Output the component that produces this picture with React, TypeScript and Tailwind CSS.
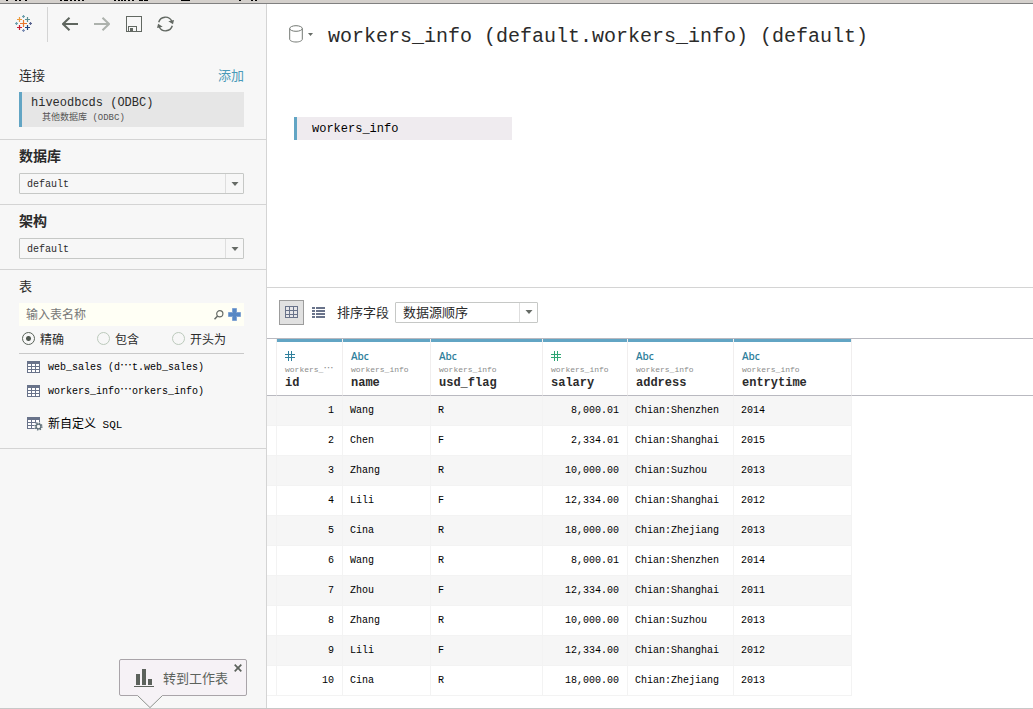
import React from "react";

const mono = "font-['Liberation_Mono','Noto_Sans_CJK_SC',monospace]";
const cjk = "font-['Noto_Sans_CJK_SC',sans-serif]";

type Column = {
  name: string;
  source: React.ReactNode;
  kind: "text" | "number";
  hash?: string;
};

const Dots = () => <span className={`${cjk} inline-block w-3 text-center text-[12px] leading-[10px]`}>⋯</span>;

const columns: Column[] = [
  {
    name: "id",
    source: (
      <>
        workers_<span className={`${cjk} inline-block text-[10px] leading-[6px]`}>⋯</span>
      </>
    ),
    kind: "number",
    hash: "text-[#2f7f9c]",
  },
  { name: "name", source: "workers_info", kind: "text" },
  { name: "usd_flag", source: "workers_info", kind: "text" },
  { name: "salary", source: "workers_info", kind: "number", hash: "text-[#2fa574]" },
  { name: "address", source: "workers_info", kind: "text" },
  { name: "entrytime", source: "workers_info", kind: "text" },
];

const rows = [
  ["1", "Wang", "R", "8,000.01", "Chian:Shenzhen", "2014"],
  ["2", "Chen", "F", "2,334.01", "Chian:Shanghai", "2015"],
  ["3", "Zhang", "R", "10,000.00", "Chian:Suzhou", "2013"],
  ["4", "Lili", "F", "12,334.00", "Chian:Shanghai", "2012"],
  ["5", "Cina", "R", "18,000.00", "Chian:Zhejiang", "2013"],
  ["6", "Wang", "R", "8,000.01", "Chian:Shenzhen", "2014"],
  ["7", "Zhou", "F", "12,334.00", "Chian:Shanghai", "2011"],
  ["8", "Zhang", "R", "10,000.00", "Chian:Suzhou", "2013"],
  ["9", "Lili", "F", "12,334.00", "Chian:Shanghai", "2012"],
  ["10", "Cina", "R", "18,000.00", "Chian:Zhejiang", "2013"],
];

function Caret({ className = "" }: { className?: string }) {
  return (
    <svg className={className} width="8" height="4" viewBox="0 0 8 4" aria-hidden="true">
      <path d="M0.5 0h7L4 4z" fill="#666b66" />
    </svg>
  );
}

function Picker({ id, label, value, className }: { id: string; label: string; value: string; className: string }) {
  return (
    <div className="relative w-full">
      <select
        id={id}
        aria-label={label}
        className={`block h-[21px] w-full appearance-none rounded-[1px] border border-[#c6c8c6] pl-[7px] pr-5 ${className}`}
      >
        <option>{value}</option>
      </select>
      <span className="pointer-events-none absolute inset-y-px right-px flex w-[18px] items-center justify-center border-l border-[#dedede]">
        <Caret />
      </span>
    </div>
  );
}

function GridIcon({ fill = "#ffffff", header = true }: { fill?: string; header?: boolean }) {
  return (
    <svg width="13" height="12" viewBox="0 0 13 12" shapeRendering="crispEdges" aria-hidden="true">
      <rect width="13" height="12" fill="#69738a" />
      {[header ? 3 : 1, header ? 6 : 5, 9].map((y) =>
        [1, 5, 9].map((x) => (
          <rect key={`${x}-${y}`} x={x} y={y} width="3" height={header || y === 9 ? 2 : 3} fill={fill} />
        )),
      )}
    </svg>
  );
}

function CustomSqlIcon() {
  return (
    <svg width="16" height="14" viewBox="0 0 16 14" aria-hidden="true">
      <g shapeRendering="crispEdges">
        <rect width="13" height="12" fill="#69738a" />
        {[3, 6, 9].map((y) => [1, 5, 9].map((x) => <rect key={`${x}-${y}`} x={x} y={y} width="3" height="2" fill="#fff" />))}
      </g>
      <circle cx="11.5" cy="9.5" r="4.4" fill="#f7f7f7" />
      <circle cx="11.5" cy="9.5" r="3.3" fill="none" stroke="#60717a" strokeWidth="1.6" strokeDasharray="1.3 1.29" />
      <circle cx="11.5" cy="9.5" r="2.4" fill="#f7f7f7" stroke="#60717a" strokeWidth="1.3" />
    </svg>
  );
}

function Logo() {
  const marks: [number, number, number, string][] = [
    [8.5, 8.5, 3.5, "#e8762c"],
    [4.5, 4.5, 2.5, "#eb9a3c"],
    [12.5, 4.5, 2.5, "#5c9092"],
    [4.5, 12.5, 2.5, "#c72035"],
    [12.5, 12.5, 2.5, "#1f447e"],
    [8.5, 1.5, 1.5, "#6da0ad"],
    [8.5, 15.5, 1.5, "#7d8fb5"],
    [1.5, 8.5, 1.5, "#6da0ad"],
    [15.5, 8.5, 1.5, "#5b6591"],
  ];
  return (
    <svg width="17" height="17" viewBox="0 0 17 17" aria-hidden="true">
      {marks.map(([x, y, r, c]) => (
        <path key={`${x}-${y}`} d={`M${x - r} ${y}h${2 * r}M${x} ${y - r}v${2 * r}`} stroke={c} strokeWidth="1.2" />
      ))}
    </svg>
  );
}

function Arrow({ color, flip }: { color: string; flip?: boolean }) {
  return (
    <svg width="16" height="14" viewBox="0 0 16 14" fill="none" stroke={color} strokeWidth="2" aria-hidden="true">
      <path d={flip ? "M0 7h15M8.5 0.7 15 7l-6.5 6.3" : "M16 7H1M7.5 0.7 1 7l6.5 6.3"} />
    </svg>
  );
}

function SideHeading({ children, bold, htmlFor }: { children: React.ReactNode; bold?: boolean; htmlFor: string }) {
  return (
    <label
      htmlFor={htmlFor}
      className={`block h-5 text-[#2b2b2b] ${bold ? "text-[14px] font-bold leading-[18px]" : "text-[13px] leading-5"}`}
    >
      {children}
    </label>
  );
}

function Sidebar() {
  return (
    <aside className="flex w-[267px] shrink-0 flex-col border-r border-[#d4d4d4] bg-[#f7f7f7]">
      <div className="flex h-11 items-start pl-[15px] pt-[3px]">
        <button aria-label="Start page" className="mt-2 block">
          <Logo />
        </button>
        <span className="ml-[15px] h-[35px] w-px bg-[#d4d4d4]" />
        <div className="mt-[9px] flex h-4 items-center gap-4 pl-[14px]">
          <button aria-label="Back"><Arrow color="#5f665f" /></button>
          <button aria-label="Forward"><Arrow color="#adb2ad" flip /></button>
          <button aria-label="Save">
            <svg width="16" height="16" viewBox="0 0 16 16" shapeRendering="crispEdges" aria-hidden="true">
              <path d="M0.5 0.5h15v15H.5zM2.5 15V10.5h8V15" fill="none" stroke="#626862" />
              <path d="M4 12h3v3H4z" fill="#626862" />
            </svg>
          </button>
          <button aria-label="Refresh" className="-ml-px">
            <svg width="17" height="16" viewBox="0 0 17 16" fill="none" aria-hidden="true">
              <path d="M1.7 6.2A7 7 0 0 1 14.8 5.3M15.3 9.8A7 7 0 0 1 2.2 10.7" stroke="#626862" strokeWidth="1.4" />
              <path d="M11.3 5.2l5.7-1.3-1 4.3zM5.7 10.8L0 12l1.1-4.3z" fill="#626862" />
            </svg>
          </button>
        </div>
      </div>

      <section className="border-b border-[#d4d4d4] pb-3 pl-[19px] pr-[22px] pt-[17px]">
        <div className="flex h-5 items-center justify-between text-[13px]">
          <h2 className="text-[#2b2b2b]">连接</h2>
          <a href="#add" className="text-[#4a9ab9]">添加</a>
        </div>
        <button className={`mt-[7px] block h-[35px] w-full border-l-[3px] border-[#62a5c4] bg-[#e6e6e6] pl-[9px] text-left ${mono}`}>
          <span className="block text-[12px] leading-4 text-[#2b2b2b]">hiveodbcds (ODBC)</span>
          <span className="block pl-[11px] text-[9px] leading-[14px] text-[#555555]">其他数据库 (ODBC)</span>
        </button>
      </section>

      <section className="border-b border-[#d4d4d4] pb-[10px] pl-[19px] pr-[22px] pt-[6px]">
        <SideHeading bold htmlFor="database">数据库</SideHeading>
        <div className="mt-[7px]">
          <Picker id="database" label="数据库" value="default" className={`${mono} bg-[#f7f7f7] pt-[2px] text-[10px] text-[#2b2b2b]`} />
        </div>
      </section>

      <section className="border-b border-[#d4d4d4] pb-[10px] pl-[19px] pr-[22px] pt-[6px]">
        <SideHeading bold htmlFor="schema">架构</SideHeading>
        <div className="mt-[7px]">
          <Picker id="schema" label="架构" value="default" className={`${mono} bg-[#f7f7f7] pt-[2px] text-[10px] text-[#2b2b2b]`} />
        </div>
      </section>

      <section className="border-b border-[#d4d4d4] pb-3 pl-[19px] pr-[22px] pt-[6px]">
        <SideHeading htmlFor="table-name">表</SideHeading>
        <div className="mt-[7px] flex h-[23px] items-center bg-[#fffff5] pl-[7px] pr-[3px]">
          <input
            id="table-name"
            placeholder="输入表名称"
            className="min-w-0 flex-1 bg-transparent pb-[2px] text-[12px] text-[#2b2b2b] outline-none placeholder:text-[#777777]"
          />
          <button aria-label="Search">
            <svg width="10" height="10" viewBox="0 0 10 10" fill="none" stroke="#666b66" aria-hidden="true">
              <circle cx="5.8" cy="3.8" r="3.1" strokeWidth="1.2" />
              <path d="M3.6 6.1.5 9.3" strokeWidth="1.5" />
            </svg>
          </button>
          <button aria-label="Add table" className="ml-[4px]">
            <svg width="13" height="13" viewBox="0 0 13 13" aria-hidden="true">
              <path d="M4.5.5h4v4h4v4h-4v4h-4v-4h-4v-4h4z" fill="#5788c4" stroke="#80a3d3" />
            </svg>
          </button>
        </div>
        <div className="grid h-7 grid-cols-3 border-b border-[#c9c9c9] pb-[2px]">
          {["精确", "包含", "开头为"].map((t, i) => (
            <label key={t} className="flex items-center gap-[5px] whitespace-nowrap pl-[3px] text-[12px] leading-5 text-[#2b2b2b]">
              <input
                type="radio"
                name="match"
                defaultChecked={i === 0}
                className="h-[13px] w-[13px] shrink-0 appearance-none rounded-full border border-[#bccabc] checked:border-[#596359] checked:bg-[radial-gradient(circle,#505850_2px,transparent_3px)]"
              />
              {t}
            </label>
          ))}
        </div>
        <ul className={`pl-2 pt-px text-[10px] text-black ${mono}`}>
          <li>
            <button className="flex h-6 items-center gap-2 whitespace-nowrap">
              <GridIcon />
              <span>web_sales (d<Dots />t.web_sales)</span>
            </button>
          </li>
          <li>
            <button className="flex h-6 items-center gap-2 whitespace-nowrap">
              <GridIcon />
              <span>workers_info<Dots />orkers_info)</span>
            </button>
          </li>
          <li className="mt-[9px]">
            <button className="flex h-6 items-center gap-[5px] text-[12px]">
              <CustomSqlIcon />
              <span className="pt-[2px]">新自定义<span className="text-[11px]"> SQL</span></span>
            </button>
          </li>
        </ul>
      </section>

      <div className="mt-auto flex flex-col items-end pr-[19px]">
        <div className="flex h-[37px] w-32 rounded-[2px] border border-[#a9a4a9] bg-[#f6f2f6]">
          <button className="flex flex-1 items-center gap-[9px] pl-[14px] text-[13px] text-[#5c625c]">
            <svg width="20" height="18" viewBox="0 0 20 18" fill="#5c625c" shapeRendering="crispEdges" aria-hidden="true">
              <path d="M2 5h4v11H2zM8 0h4v16H8zM14 10h4v6h-4zM0 17h20v1H0z" />
            </svg>
            转到工作表
          </button>
          <button aria-label="Close" className="mr-1 mt-1 h-2">
            <svg width="8" height="8" viewBox="0 0 8 8" aria-hidden="true">
              <path d="M.7.7l6.6 6.6M7.3.7.7 7.3" stroke="#5c625c" strokeWidth="1.7" />
            </svg>
          </button>
        </div>
        <svg className="relative -mt-px mr-[84px]" width="26" height="13" viewBox="0 0 26 13" aria-hidden="true">
          <path d="M0 0h26L13 13z" fill="#f6f2f6" />
          <path d="M.5.5 13 12.6 25.5.5" fill="none" stroke="#8d928d" />
        </svg>
      </div>
    </aside>
  );
}

function DataTable() {
  return (
    <table className={`w-full table-fixed border-separate border-spacing-0 text-left ${mono}`}>
      <colgroup>
        <col className="w-[10px]" />
        <col className="w-[66px]" />
        <col className="w-[88px]" />
        <col className="w-[112px]" />
        <col className="w-[85px]" />
        <col className="w-[106px]" />
        <col className="w-[118px]" />
        <col />
      </colgroup>
      <thead>
        <tr>
          <td className="border-b border-r border-b-[#b9b9c0] border-r-[#f0eeee]" />
          {columns.map((c) => (
            <th key={c.name} scope="col" className="border-b border-r border-b-[#b9b9c0] border-r-[#f0eeee] p-0 align-top font-normal">
              <div className="h-[56px] border-t-[3px] border-[#62a5c4] pl-2 pt-[6px]">
                <div className="flex h-4 items-center font-['Open_Sans',sans-serif] text-[10px] font-semibold leading-4 text-[#2f7f9c]">
                  {c.kind === "text" ? (
                    "Abc"
                  ) : (
                    <svg className={c.hash} width="10" height="10" viewBox="0 0 10 10" shapeRendering="crispEdges" aria-label="#">
                      <path d="M0 3.5h10M0 6.5h10M3.5 0v10M6.5 0v10" stroke="currentColor" />
                    </svg>
                  )}
                </div>
                <div className="h-3 whitespace-nowrap text-[8px] leading-3 text-[#8b8b8b]">{c.source}</div>
                <div className="h-[14px] text-[12px] font-bold leading-[14px] text-[#2b2b2b]">{c.name}</div>
              </div>
            </th>
          ))}
          <td className="border-b border-[#b9b9c0]" />
        </tr>
      </thead>
      <tbody className="text-[10px] text-black">
        {rows.map((row) => (
          <tr key={row[0]} className="group">
            <td className="h-[30px] border-b border-r border-[#f3f3f3] group-odd:bg-[#f6f6f6]" />
            {row.map((v, i) => (
              <td
                key={i}
                className={`h-[30px] border-b border-r border-[#f3f3f3] py-0 group-odd:bg-[#f6f6f6] ${columns[i].kind === "number" ? "px-2 text-right" : "px-[7px] text-left"}`}
              >
                {v}
              </td>
            ))}
            <td />
          </tr>
        ))}
      </tbody>
    </table>
  );
}

function MenuEdge() {
  const ticks = [6, 15, 19, 25, 60, 64, 66, 70, 74, 78, 82, 114, 118, 121, 124, 128, 132, 239, 251, 255];
  return (
    <div className="h-1 shrink-0 border-b border-[#808080] bg-[#d4d0cc]">
      <svg className="block" width="270" height="1" shapeRendering="crispEdges" aria-hidden="true">
        {ticks.map((x) => (
          <rect key={x} x={x} width="2" height="1" />
        ))}
        <path d="M139 0h4v1h-4zM144 0h4v1h-4zM181 0h9v1h-9z" />
      </svg>
    </div>
  );
}

export default function App() {
  return (
    <div className={`flex min-h-screen flex-col bg-white ${cjk}`}>
      <MenuEdge />
      <div className="flex flex-1 border-b border-[#c8c8c8]">
        <Sidebar />
        <main className="flex min-w-0 flex-1 flex-col">
          <section className="h-[284px] border-b border-[#d4d4d4] pl-[22px] pt-[18px]">
            <div className="flex h-[30px] items-center">
              <button aria-label="Data source" className="flex items-center gap-[5px] pb-[6px]">
                <svg width="14" height="18" viewBox="0 0 14 18" fill="none" stroke="#747974" aria-hidden="true">
                  <ellipse cx="7" cy="3.5" rx="6.3" ry="2.8" />
                  <path d="M.7 3.5v10.7c0 1.6 2.8 2.8 6.3 2.8s6.3-1.2 6.3-2.8V3.5" />
                </svg>
                <svg width="5" height="3" viewBox="0 0 5 3" aria-hidden="true">
                  <path d="M0 0h5L2.5 3z" fill="#666b66" />
                </svg>
              </button>
              <h1 className={`ml-[15px] whitespace-nowrap text-[20px] leading-[30px] text-[#2b2b2b] ${mono}`}>
                workers_info (default.workers_info) (default)
              </h1>
            </div>
            <button className={`ml-[5px] mt-[65px] block h-[23px] w-[218px] border-l-[3px] border-[#62a5c4] bg-[#efebef] pl-[15px] text-left text-[12px] leading-6 text-black ${mono}`}>
              workers_info
            </button>
          </section>

          <div className="flex h-[50px] items-center pb-[2px] pl-3">
            <button aria-label="Grid view" className="flex h-[25px] w-[25px] items-center justify-center border border-[#9c9c9c] bg-[#e1e1e1]">
              <GridIcon fill="#e6e6e9" header={false} />
            </button>
            <button aria-label="List view" className="ml-2">
              <svg width="13" height="11" viewBox="0 0 13 11" fill="#69738a" shapeRendering="crispEdges" aria-hidden="true">
                <path d="M0 0h3v2H0zM4 0h9v2H4zM0 3h3v2H0zM4 3h9v2H4zM0 6h3v2H0zM4 6h9v2H4zM0 9h3v2H0zM4 9h9v2H4z" />
              </svg>
            </button>
            <label htmlFor="sort" className="ml-3 whitespace-nowrap text-[13px] text-[#2b2b2b]">排序字段</label>
            <div className="ml-[6px] w-[143px]">
              <Picker id="sort" label="排序字段" value="数据源顺序" className="bg-white pb-px text-[13px] leading-[18px] text-[#2b2b2b]" />
            </div>
          </div>

          <div className="border-t border-[#b9b9c0]">
            <DataTable />
          </div>
        </main>
      </div>
    </div>
  );
}
